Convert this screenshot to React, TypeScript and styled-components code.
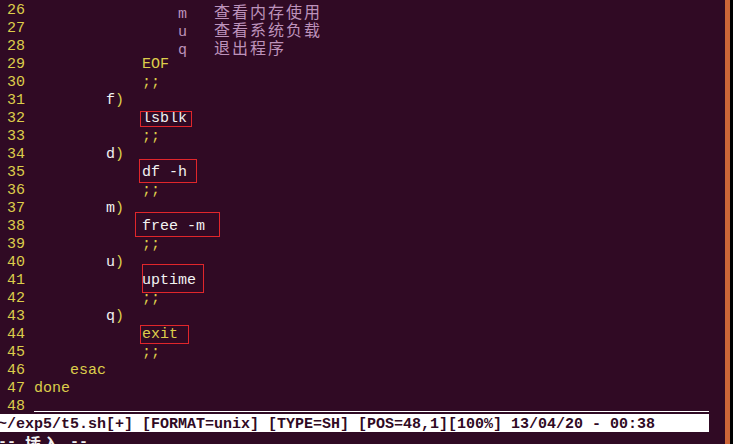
import React from "react";
import styled, { createGlobalStyle } from "styled-components";

const Global = createGlobalStyle`
  html, body { margin: 0; padding: 0; background: #300a24; }
  body { width: 733px; height: 444px; overflow: hidden; }
`;

const C = {
  bg: "#300a24",
  yellow: "#dccd4b",
  white: "#f2f2f2",
  magenta: "#bd92bb",
  orange: "#cd6638",
  red: "#e0262b",
};

const Window = styled.div`
  display: flex;
  width: 733px;
  height: 444px;
  background: ${C.bg};
  overflow: hidden;
`;

const Terminal = styled.div`
  position: relative;
  width: 725px;
  height: 444px;
  overflow: hidden;
  flex: none;
`;

const Screen = styled.div`
  margin-left: -2px;
  width: 711px;
  font-family: "Liberation Mono", "Noto Sans CJK SC", monospace;
  font-size: 15px;
  white-space: pre;
`;

const Row = styled.div<{ $status?: boolean; $bold?: boolean }>`
  display: flex;
  box-sizing: border-box;
  height: 18px;
  padding-top: 4px;
  line-height: 14px;
  background: ${(p) => (p.$status ? "#ffffff" : "transparent")};
  color: ${(p) => (p.$status ? C.bg : C.white)};
  font-weight: ${(p) => (p.$bold || p.$status ? 700 : 400)};
`;

const LineNr = styled.span`
  width: 36px;
  flex: none;
  color: ${C.yellow};
`;

const Code = styled.span<{ $cursor?: boolean }>`
  flex: 1;
  ${(p) =>
    p.$cursor
      ? `background: linear-gradient(#ffffff, #ffffff) 0 11px / 100% 1px no-repeat;`
      : ""}
`;

const Tok = styled.span<{ $c: "y" | "w" | "m" }>`
  color: ${(p) => (p.$c === "y" ? C.yellow : p.$c === "m" ? C.magenta : C.white)};
`;

const Han = styled.span`
  font-family: "Noto Sans CJK SC", sans-serif;
  font-size: 16px;
  letter-spacing: 2px;
`;

const Scrollbar = styled.div`
  width: 5px;
  flex: none;
  background: ${C.orange};
`;

const Edge = styled.div`
  flex: 1;
  background: #000;
`;

const Mark = styled.div<{ $x: number; $y: number; $w: number; $h: number }>`
  position: absolute;
  left: ${(p) => p.$x}px;
  top: ${(p) => p.$y}px;
  width: ${(p) => p.$w}px;
  height: ${(p) => p.$h}px;
  box-sizing: border-box;
  border: 1px solid ${C.red};
`;

type Seg = [string, "y" | "w" | "m", boolean?];
type Line = { n: number; segs: Seg[] };

const sp = (k: number) => " ".repeat(k);

const lines: Line[] = [
  { n: 26, segs: [[sp(16) + "m   ", "m"], ["查看内存使用", "m", true]] },
  { n: 27, segs: [[sp(16) + "u   ", "m"], ["查看系统负载", "m", true]] },
  { n: 28, segs: [[sp(16) + "q   ", "m"], ["退出程序", "m", true]] },
  { n: 29, segs: [[sp(12) + "EOF", "y"]] },
  { n: 30, segs: [[sp(12) + ";;", "y"]] },
  { n: 31, segs: [[sp(8) + "f", "w"], [")", "y"]] },
  { n: 32, segs: [[sp(12) + "lsblk", "w"]] },
  { n: 33, segs: [[sp(12) + ";;", "y"]] },
  { n: 34, segs: [[sp(8) + "d", "w"], [")", "y"]] },
  { n: 35, segs: [[sp(12) + "df -h", "w"]] },
  { n: 36, segs: [[sp(12) + ";;", "y"]] },
  { n: 37, segs: [[sp(8) + "m", "w"], [")", "y"]] },
  { n: 38, segs: [[sp(12) + "free -m", "w"]] },
  { n: 39, segs: [[sp(12) + ";;", "y"]] },
  { n: 40, segs: [[sp(8) + "u", "w"], [")", "y"]] },
  { n: 41, segs: [[sp(12) + "uptime", "w"]] },
  { n: 42, segs: [[sp(12) + ";;", "y"]] },
  { n: 43, segs: [[sp(8) + "q", "w"], [")", "y"]] },
  { n: 44, segs: [[sp(12) + "exit", "y"]] },
  { n: 45, segs: [[sp(12) + ";;", "y"]] },
  { n: 46, segs: [[sp(4) + "esac", "y"]] },
  { n: 47, segs: [["done", "y"]] },
  { n: 48, segs: [] },
];

const marks = [
  { x: 140, y: 111, w: 52, h: 16 },
  { x: 139, y: 159, w: 58, h: 24 },
  { x: 135, y: 212, w: 85, h: 25 },
  { x: 142, y: 264, w: 62, h: 29 },
  { x: 140, y: 325, w: 49, h: 19 },
];

export default function App() {
  return (
    <>
      <Global />
      <Window>
        <Terminal>
          <Screen>
            {lines.map((l) => (
              <Row key={l.n}>
                <LineNr>{String(l.n).padStart(3, " ") + " "}</LineNr>
                <Code $cursor={l.n === 48}>
                  {l.segs.map(([t, c, han], i) => (
                    <Tok key={i} $c={c}>
                      {han ? <Han>{t}</Han> : t}
                    </Tok>
                  ))}
                </Code>
              </Row>
            ))}
            <Row $status>
              {"~/exp5/t5.sh[+] [FORMAT=unix] [TYPE=SH] [POS=48,1][100%] 13/04/20 - 00:38"}
            </Row>
            <Row $bold>
              {"-- "}
              <Han>插入</Han>
              {" --"}
            </Row>
          </Screen>
          {marks.map((m, i) => (
            <Mark key={i} $x={m.x} $y={m.y} $w={m.w} $h={m.h} />
          ))}
        </Terminal>
        <Scrollbar />
        <Edge />
      </Window>
    </>
  );
}
